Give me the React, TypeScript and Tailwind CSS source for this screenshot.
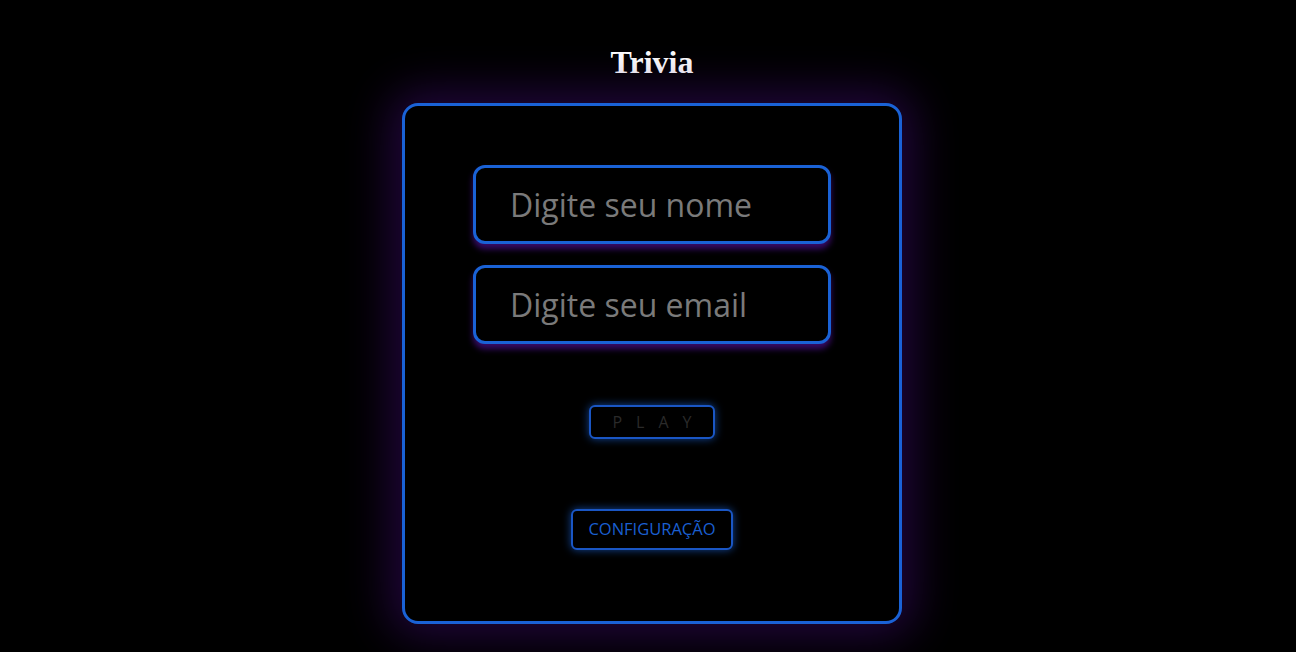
import React from "react";

const App: React.FC = () => {
  return (
    <div className="min-h-[652px] w-full bg-black flex flex-col items-center pl-[8px]">
      <h1 className="mt-[44px] text-[32px] leading-[37px] font-bold text-white font-['Liberation_Serif',serif]">
        Trivia
      </h1>
      <div className="mt-[22px] w-[500px] h-[521px] border-[3px] border-[#1a62d6] rounded-[16px] bg-black shadow-[0_0_45px_12px_rgba(55,10,100,0.6)] flex flex-col items-center pt-[59px] font-['Open_Sans',sans-serif]">
        <input
          type="text"
          placeholder="Digite seu nome"
          className="w-[358px] h-[79px] border-[3px] border-[#1a62d6] rounded-[12px] bg-black pl-[34px] text-[32px] text-[#7a7a7a] placeholder:text-[#7a7a7a] outline-none shadow-[0_5px_6px_rgba(80,15,150,0.7)]"
        />
        <input
          type="email"
          placeholder="Digite seu email"
          className="mt-[21px] w-[358px] h-[79px] border-[3px] border-[#1a62d6] rounded-[12px] bg-black pl-[34px] text-[32px] text-[#7a7a7a] placeholder:text-[#7a7a7a] outline-none shadow-[0_5px_6px_rgba(80,15,150,0.7)]"
        />
        <button className="mt-[61px] w-[126px] h-[34px] border-2 border-[#1a56c4] rounded-[6px] bg-black text-[#2a2a2a] text-[16px] tracking-[14px] pl-[14px] shadow-[0_0_8px_rgba(26,98,214,0.7)]">
          PLAY
        </button>
        <button className="mt-[70px] w-[162px] h-[41px] border-2 border-[#1a56c4] rounded-[6px] bg-black text-[#1a5fd0] text-[16.5px] shadow-[0_0_8px_rgba(26,98,214,0.7)]">
          CONFIGURAÇÃO
        </button>
      </div>
    </div>
  );
};

export default App;
